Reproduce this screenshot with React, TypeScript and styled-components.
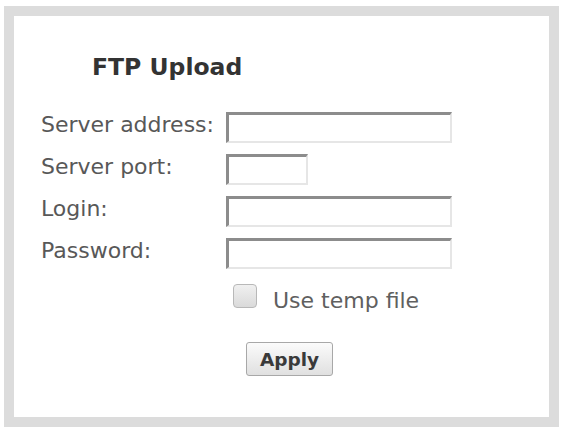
import React from "react";
import styled, { createGlobalStyle } from "styled-components";

const Global = createGlobalStyle`
  html, body { margin: 0; padding: 0; background: #ffffff; }
  body { font-family: "DejaVu Sans", Verdana, sans-serif; }
  * { box-sizing: border-box; }
`;

const Frame = styled.div`
  width: 555px;
  height: 421px;
  margin: 6px 0 0 4px;
  border: 10px solid #dcdcdc;
  background: #ffffff;
  padding: 37px 0 0 27px;
`;

const Title = styled.h2`
  margin: 0 0 31px 51px;
  font-size: 23.5px;
  line-height: 28px;
  font-weight: bold;
  color: #333333;
`;

const Form = styled.div`
  display: grid;
  grid-template-columns: 185px auto;
  row-gap: 11px;
  align-items: start;
`;

const Label = styled.label`
  font-size: 22px;
  line-height: 26px;
  color: #585858;
  white-space: nowrap;
`;

const TextInput = styled.input<{ $w: number }>`
  display: block;
  width: ${(p) => p.$w}px;
  height: 31px;
  margin: 0;
  padding: 0 4px;
  border-top: 3px solid #8c8c8c;
  border-left: 3px solid #8c8c8c;
  border-right: 2px solid #e6e6e6;
  border-bottom: 2px solid #e6e6e6;
  background: #ffffff;
  font-family: inherit;
  font-size: 18px;
  outline: none;
`;

const Spacer = styled.div``;

const CheckRow = styled.label`
  display: flex;
  align-items: flex-start;
  gap: 16px;
  margin: 4px 0 0 7px;
  font-size: 22px;
  line-height: 26px;
  color: #606060;
`;

const Box = styled.span`
  flex: none;
  width: 24px;
  height: 24px;
  border: 1px solid #b8b8b8;
  border-radius: 4px;
  background: linear-gradient(#f0f0f0, #dadada);
`;

const CheckText = styled.span`
  margin-top: 4px;
`;

const ButtonCell = styled.div`
  padding: 17px 0 0 20px;
`;

const Button = styled.button`
  display: block;
  width: 87px;
  height: 34px;
  border: 1px solid #a8a8a8;
  border-radius: 3px;
  background: linear-gradient(#fbfbfb, #e0e0e0);
  font-family: inherit;
  font-size: 18.5px;
  font-weight: bold;
  color: #3a3a3a;
  padding: 0;
`;

export default function App() {
  return (
    <>
      <Global />
      <Frame>
        <Title>FTP Upload</Title>
        <Form>
          <Label>Server address:</Label>
          <TextInput $w={226} />
          <Label>Server port:</Label>
          <TextInput $w={82} />
          <Label>Login:</Label>
          <TextInput $w={226} />
          <Label>Password:</Label>
          <TextInput $w={226} type="password" />
          <Spacer />
          <CheckRow>
            <Box />
            <CheckText>Use temp file</CheckText>
          </CheckRow>
          <Spacer />
          <ButtonCell>
            <Button>Apply</Button>
          </ButtonCell>
        </Form>
      </Frame>
    </>
  );
}
